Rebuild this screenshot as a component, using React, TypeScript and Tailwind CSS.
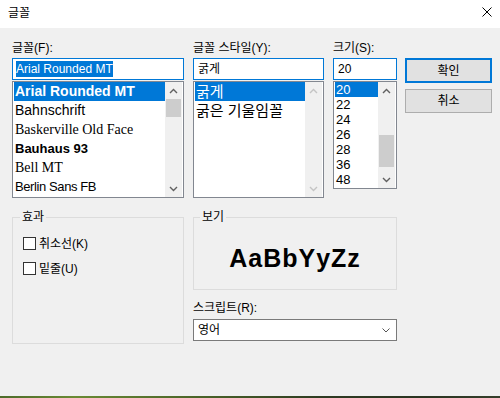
import React from "react";

function Chevron({ dir, color }: { dir: "up" | "down"; color: string }) {
  return (
    <svg width="9" height="6" viewBox="0 0 9 6">
      <path
        d={dir === "up" ? "M1 5 L4.5 1.5 L8 5" : "M1 1 L4.5 4.5 L8 1"}
        fill="none"
        stroke={color}
        strokeWidth="1.4"
      />
    </svg>
  );
}

function ScrollBar({
  thumbTop,
  thumbHeight,
  disabled,
}: {
  thumbTop?: number;
  thumbHeight?: number;
  disabled?: boolean;
}) {
  const c = disabled ? "#c4c4c4" : "#606060";
  return (
    <div className="w-[17px] h-full bg-[#f0f0f0] flex flex-col shrink-0">
      <div className="h-[17px] flex items-center justify-center shrink-0">
        <Chevron dir="up" color={c} />
      </div>
      <div className="flex-1 flex flex-col px-[1px]">
        {!disabled && (
          <>
            <div style={{ height: thumbTop }} />
            <div className="bg-[#cdcdcd]" style={{ height: thumbHeight }} />
          </>
        )}
      </div>
      <div className="h-[17px] flex items-center justify-center shrink-0">
        <Chevron dir="down" color={c} />
      </div>
    </div>
  );
}

export default function App() {
  return (
    <div className="w-[500px] h-[398px] bg-[#f0f0f0] flex flex-col font-['Liberation_Sans','Noto_Sans_CJK_KR',sans-serif] text-[12px] text-black overflow-hidden">
      {/* Title bar */}
      <div className="h-[28px] bg-white flex items-start justify-between pl-[8px] pr-[8px] shrink-0">
        <span className="mt-[5px] leading-[16px]">글꼴</span>
        <svg className="mt-[7px]" width="10" height="10" viewBox="0 0 10 10">
          <path d="M0.5 0.5 L9.5 9.5 M9.5 0.5 L0.5 9.5" stroke="#000" strokeWidth="1" />
        </svg>
      </div>

      {/* Body */}
      <div className="flex-1 pl-[12px]">
        {/* Top row */}
        <div className="flex mt-[10px]">
          {/* Font column */}
          <div className="w-[172px] shrink-0 flex flex-col">
            <div className="h-[20px] flex items-center leading-[16px]">글꼴(F):</div>
            <div className="h-[22px] border border-[#0078d7] bg-white flex items-center pl-[3px]">
              <span className="bg-[#0078d7] text-white leading-[16px] font-['Liberation_Sans',sans-serif]">
                Arial Rounded MT
              </span>
            </div>
            <div className="mt-[1px] h-[117px] border border-[#828790] bg-white flex px-[1px]">
              <div className="flex-1 flex flex-col overflow-hidden">
                <div className="h-[19px] leading-[19px] bg-[#0078d7] text-white pl-[1px] font-bold text-[14px] font-['Liberation_Sans',sans-serif] shrink-0">
                  Arial Rounded MT
                </div>
                <div className="h-[19px] leading-[19px] pl-[1px] text-[14px] font-['Liberation_Sans',sans-serif] shrink-0">
                  Bahnschrift
                </div>
                <div className="h-[19px] leading-[19px] pl-[1px] text-[14px] font-['Liberation_Serif',serif] shrink-0">
                  Baskerville Old Face
                </div>
                <div className="h-[19px] leading-[19px] pl-[1px] text-[13px] font-bold font-['Liberation_Sans',sans-serif] shrink-0">
                  Bauhaus 93
                </div>
                <div className="h-[19px] leading-[19px] pl-[1px] text-[14px] font-['Liberation_Serif',serif] shrink-0">
                  Bell MT
                </div>
                <div className="h-[19px] leading-[19px] pl-[1px] text-[13px] tracking-[-0.4px] font-['Liberation_Sans',sans-serif] shrink-0">
                  Berlin Sans FB
                </div>
              </div>
              <ScrollBar thumbTop={0} thumbHeight={18} />
            </div>
          </div>

          {/* Style column */}
          <div className="w-[131px] shrink-0 ml-[9px] flex flex-col">
            <div className="h-[20px] flex items-center leading-[16px]">글꼴 스타일(Y):</div>
            <div className="h-[22px] border border-[#0078d7] bg-white flex items-center pl-[4px] leading-[16px]">
              굵게
            </div>
            <div className="mt-[1px] h-[117px] border border-[#828790] bg-white flex pl-[1px] pr-[1px]">
              <div className="flex-1 flex flex-col">
                <div className="h-[19px] leading-[19px] bg-[#0078d7] text-white text-[15px] pl-[1px]">
                  굵게
                </div>
                <div className="h-[19px] leading-[19px] text-[15px] pl-[1px]">굵은 기울임꼴</div>
              </div>
              <ScrollBar disabled />
            </div>
          </div>

          {/* Size column */}
          <div className="w-[64px] shrink-0 ml-[9px] flex flex-col">
            <div className="h-[20px] flex items-center leading-[16px]">크기(S):</div>
            <div className="h-[22px] border border-[#0078d7] bg-white flex items-center pl-[4px] leading-[16px]">
              20
            </div>
            <div className="mt-[1px] h-[108px] border border-[#828790] bg-white flex px-[1px]">
              <div className="flex-1 flex flex-col text-[13px] font-['Liberation_Sans',sans-serif]">
                <div className="h-[15px] leading-[15px] bg-[#0078d7] text-white pl-[1px]">20</div>
                <div className="h-[15px] leading-[15px] pl-[1px]">22</div>
                <div className="h-[15px] leading-[15px] pl-[1px]">24</div>
                <div className="h-[15px] leading-[15px] pl-[1px]">26</div>
                <div className="h-[15px] leading-[15px] pl-[1px]">28</div>
                <div className="h-[15px] leading-[15px] pl-[1px]">36</div>
                <div className="h-[15px] leading-[15px] pl-[1px]">48</div>
              </div>
              <ScrollBar thumbTop={36} thumbHeight={32} />
            </div>
          </div>

          {/* Buttons */}
          <div className="w-[87px] shrink-0 ml-[8px] flex flex-col pt-[20px]">
            <div className="h-[25px] border-2 border-[#0078d7] bg-[#e1e1e1] flex items-center justify-center leading-[16px]">
              확인
            </div>
            <div className="mt-[6px] h-[24px] border border-[#adadad] bg-[#e1e1e1] flex items-center justify-center leading-[16px]">
              취소
            </div>
          </div>
        </div>

        {/* Bottom row */}
        <div className="flex mt-[19px]">
          {/* Effects group */}
          <div className="w-[172px] shrink-0 h-[127px] border border-[#dcdcdc] relative pl-[10px] pt-[19px] flex flex-col">
            <div className="absolute -top-[9px] left-[7px] px-[2px] bg-[#f0f0f0] leading-[16px]">효과</div>
            <div className="h-[13px] flex items-center">
              <div className="w-[13px] h-[13px] border border-[#333333] bg-white shrink-0" />
              <span className="ml-[3px] leading-[16px]">취소선(K)</span>
            </div>
            <div className="h-[13px] mt-[12px] flex items-center">
              <div className="w-[13px] h-[13px] border border-[#333333] bg-white shrink-0" />
              <span className="ml-[3px] leading-[16px]">밑줄(U)</span>
            </div>
          </div>

          {/* Right column */}
          <div className="w-[204px] shrink-0 ml-[9px] flex flex-col">
            <div className="h-[73px] border border-[#dcdcdc] relative flex items-center justify-center pt-[10px]">
              <div className="absolute -top-[9px] left-[6px] px-[2px] bg-[#f0f0f0] leading-[16px]">보기</div>
              <span className="font-bold text-[25px] tracking-[1px] leading-none font-['Liberation_Sans',sans-serif]">
                AaBbYyZz
              </span>
            </div>
            <div className="h-[29px] flex items-center pt-[6px] leading-[16px]">스크립트(R):</div>
            <div className="h-[22px] border border-[#7a7a7a] bg-white flex items-center justify-between pl-[4px] pr-[6px]">
              <span className="leading-[16px]">영어</span>
              <svg width="8" height="5" viewBox="0 0 8 5">
                <path d="M0.5 0.5 L4 4 L7.5 0.5" fill="none" stroke="#555" strokeWidth="1" />
              </svg>
            </div>
          </div>
        </div>
      </div>

      {/* Desktop strip */}
      <div className="h-[2px] shrink-0 bg-[linear-gradient(90deg,#4d6b2a,#6a8a34_15%,#4a6328_40%,#2e3a22_65%,#2b3421_85%,#353f2b)]" />
    </div>
  );
}
